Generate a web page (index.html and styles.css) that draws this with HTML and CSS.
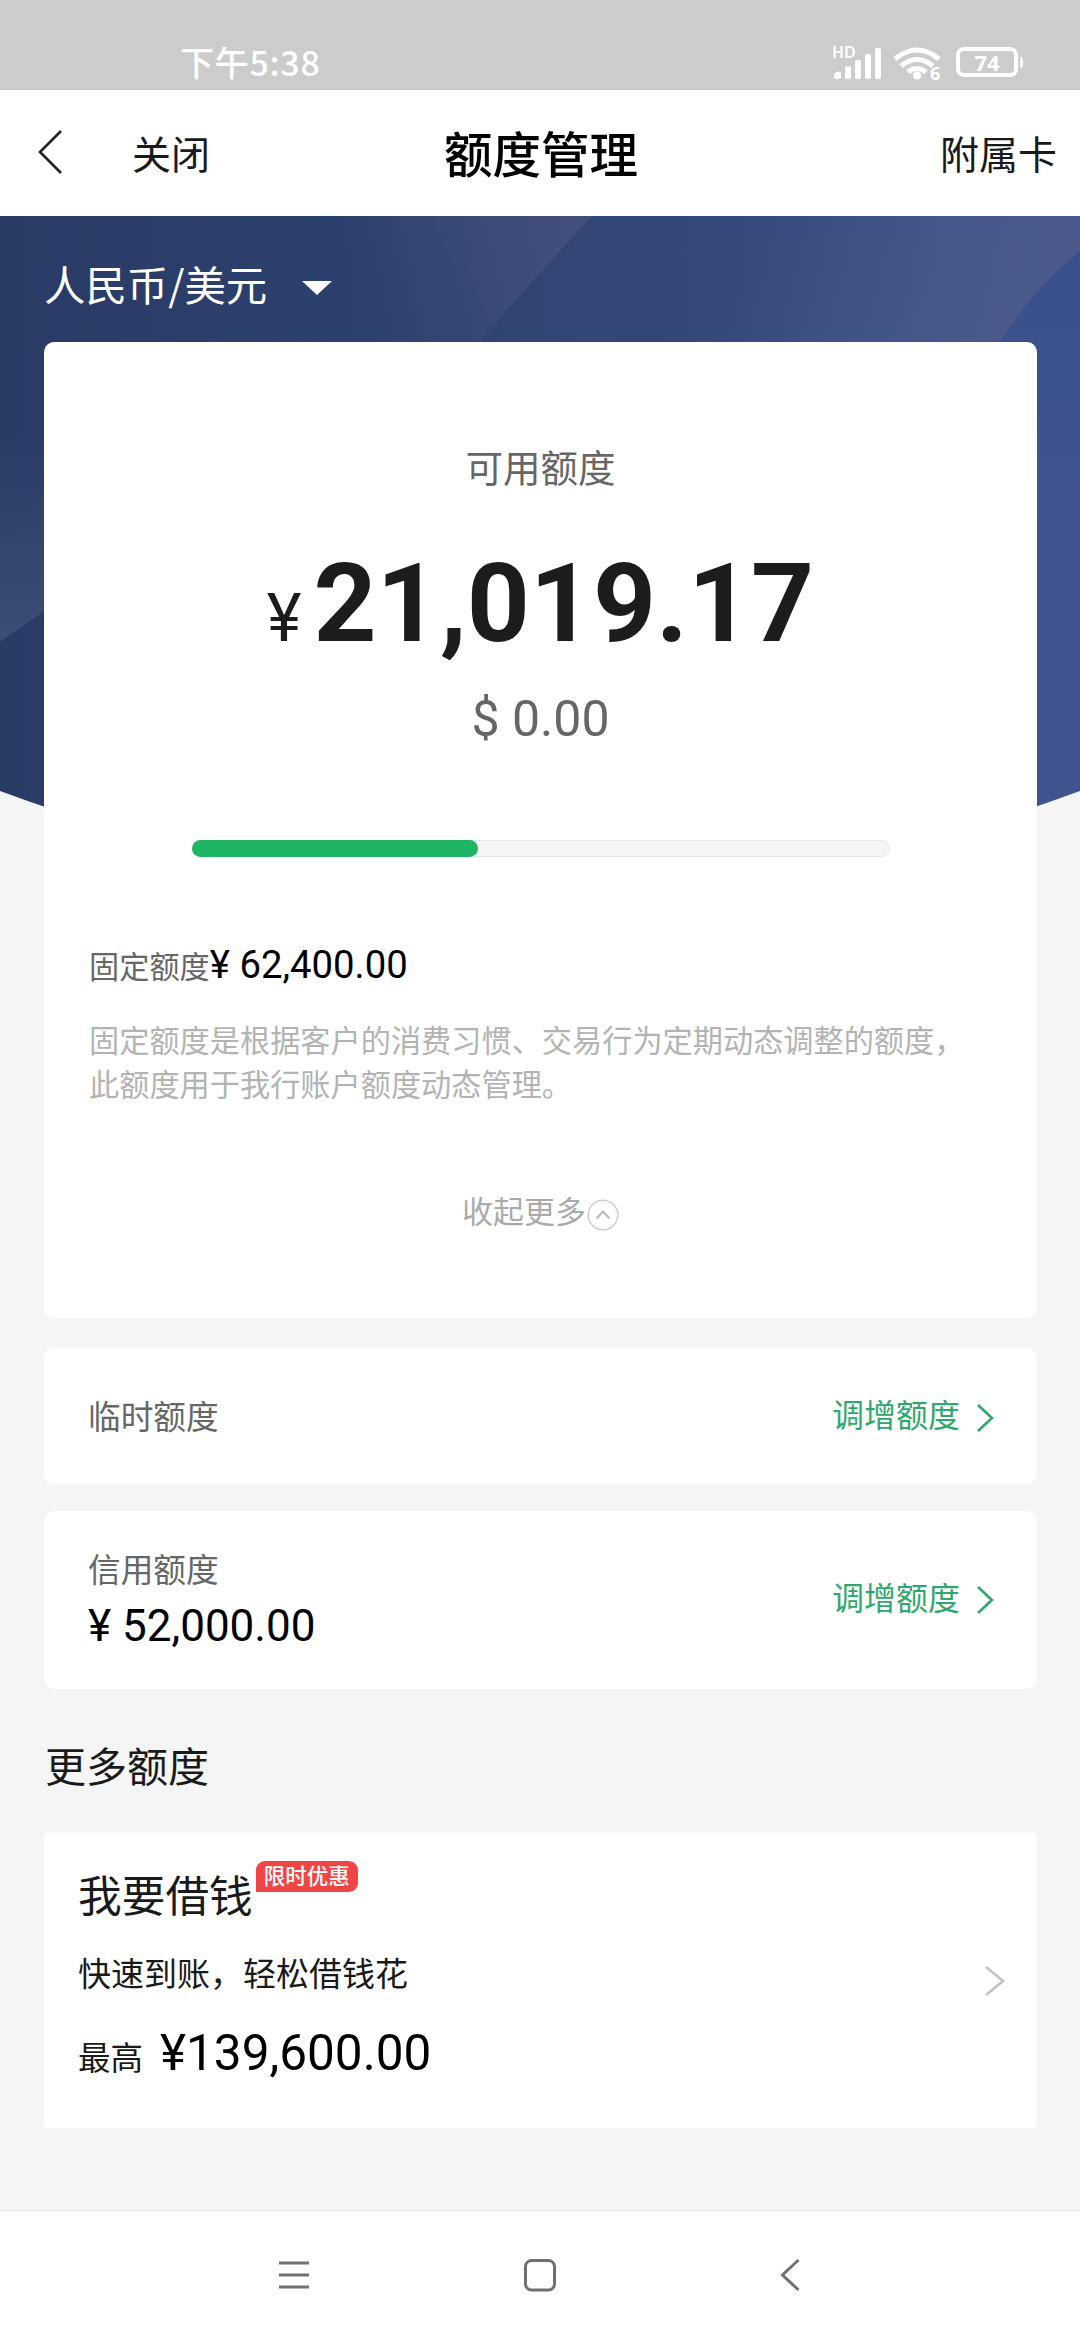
FILE: index.html
```html
<!DOCTYPE html>
<html lang="zh-CN">
<head>
<meta charset="utf-8">
<title>额度管理</title>
<link rel="stylesheet" href="styles.css">
</head>
<body>
<div class="screen">
  <div class="status">
    <span class="time">下午5:38</span>
    <div class="status-icons">
      <span class="hd">HD</span>
      <svg width="196" height="40" viewBox="0 0 196 40">
        <g fill="#fff">
          <path d="M2 34v-3a5 4 0 0 1 7-3v6q-4 2-7 0z"/>
          <rect x="13" y="22" width="6" height="13" rx="2"/>
          <rect x="23" y="16" width="6" height="19" rx="2"/>
          <rect x="33" y="10" width="6" height="25" rx="2"/>
          <rect x="43" y="4" width="6" height="31" rx="2"/>
          <circle cx="85" cy="31.500" r="4"/>
          <text class="six" x="98" y="36">6</text>
          <text class="pct" x="155" y="27" text-anchor="middle">74</text>
          <path d="M189 13q3 5.500 0 11z" stroke="#fff" stroke-width="1.500"/>
        </g>
        <g fill="none" stroke="#fff" stroke-width="5">
          <path d="M63 15q22-18 44 0M69 22q16-13 32 0M76 28q9-7 18 0"/>
          <rect x="126" y="5" width="58" height="26" rx="6" stroke-width="4"/>
        </g>
      </svg>
    </div>
  </div>
  <div class="header">
    <svg class="back" width="26" height="48" viewBox="0 0 26 48"><path d="M24 3L3 24L24 45" fill="none" stroke="#222" stroke-width="2.600"/></svg>
    <span class="close">关闭</span>
    <span class="title">额度管理</span>
    <span class="sub">附属卡</span>
  </div>
  <div class="main">
    <svg class="hero" width="1080" height="640" viewBox="0 0 1080 640">
      <defs>
        <linearGradient id="base" x1="0" y1="0" x2="1" y2="0"><stop offset="0" stop-color="#2a3b66"/><stop offset=".35" stop-color="#2e406d"/><stop offset=".65" stop-color="#364878"/><stop offset="1" stop-color="#41548f"/></linearGradient>
        <linearGradient id="beam" gradientUnits="userSpaceOnUse" x1="360" y1="70" x2="570" y2="0"><stop offset="0" stop-color="#46517b" stop-opacity="0"/><stop offset="1" stop-color="#46527e" stop-opacity=".8"/></linearGradient>
        <linearGradient id="beam2" gradientUnits="userSpaceOnUse" x1="760" y1="20" x2="1010" y2="110"><stop offset="0" stop-color="#4b5a89" stop-opacity="0"/><stop offset="1" stop-color="#4b5a89" stop-opacity=".9"/></linearGradient>
        <linearGradient id="glow" x1="0" y1="0" x2="0" y2="1"><stop offset="0" stop-color="#3c4e73" stop-opacity="0"/><stop offset="1" stop-color="#3c4e73"/></linearGradient>
        <linearGradient id="side" x1="0" y1="0" x2="0" y2="1"><stop offset="0" stop-color="#38508a"/><stop offset="1" stop-color="#41548f"/></linearGradient>
      </defs>
      <path d="M0 0H1080V575Q540 775 0 575Z" fill="url(#base)"/>
      <path d="M300 0H592Q545 50 480 126H240Z" fill="url(#beam)"/>
      <path d="M740 0H1080V36Q1035 70 1000 126H640Z" fill="url(#beam2)"/>
      <path d="M1080 36Q1035 70 1000 126V300H1080Z" fill="url(#side)"/>
      <path d="M0 220H44V395L0 426Z" fill="url(#glow)"/>
    </svg>
    <div class="currency"><span>人民币/美元</span><span class="caret"></span></div>
    <div class="card limit">
      <div class="avail">可用额度</div>
      <div class="amount"><span class="yen">¥</span><b>21,019.17</b></div>
      <div class="usd">$ 0.00</div>
      <div class="track"><div class="fill"></div></div>
      <div class="fixed">固定额度<span>¥ 62,400.00</span></div>
      <div class="desc">固定额度是根据客户的消费习惯、交易行为定期动态调整的额度，<br>此额度用于我行账户额度动态管理。</div>
      <div class="fold"><span>收起更多</span><svg width="32" height="32" viewBox="0 0 32 32"><g fill="none" stroke="#ccc" stroke-width="1.500"><circle cx="16" cy="16" r="14.800"/><path d="M9.500 19.500L16 12.500L22.500 19.500" stroke="#b8b8b8" stroke-width="2"/></g></svg></div>
    </div>
    <div class="card row temp">
      <span class="label">临时额度</span>
      <div class="raise"><span>调增额度</span><svg width="18" height="30" viewBox="0 0 18 30"><path d="M2 2L16 15L2 28" fill="none" stroke="#30a86c" stroke-width="2.600"/></svg></div>
    </div>
    <div class="card row credit">
      <div><div class="label">信用额度</div><div class="money">¥ 52,000.00</div></div>
      <div class="raise"><span>调增额度</span><svg width="18" height="30" viewBox="0 0 18 30"><path d="M2 2L16 15L2 28" fill="none" stroke="#30a86c" stroke-width="2.600"/></svg></div>
    </div>
    <div class="more">更多额度</div>
    <div class="card row loan">
      <div class="loan-info">
        <div class="loan-title">我要借钱<span class="badge">限时优惠</span></div>
        <div class="loan-sub">快速到账，轻松借钱花</div>
        <div class="loan-max">最高<span>¥139,600.00</span></div>
      </div>
      <svg width="22" height="32" viewBox="0 0 22 32"><path d="M2 2L19 16L2 30" fill="none" stroke="#c4c4c4" stroke-width="2.800"/></svg>
    </div>
  </div>
  <div class="nav">
    <svg width="34" height="34" viewBox="0 0 34 34"><path d="M3 5H33M3 17H33M3 29H33" stroke="#707070" stroke-width="3"/></svg>
    <svg width="34" height="34" viewBox="0 0 34 34"><rect x="2.500" y="2.500" width="29" height="29.500" rx="6" fill="none" stroke="#707070" stroke-width="3"/></svg>
    <svg width="34" height="34" viewBox="0 0 34 34"><path d="M28.500 2L12.500 17L28.500 32" fill="none" stroke="#707070" stroke-width="3"/></svg>
  </div>
</div>
</body>
</html>
```
FILE: styles.css
```css
* { box-sizing: border-box; }
body { margin: 0; font-family: Roboto, "Noto Sans CJK SC", sans-serif; color: #1a1a1a; }
svg { display: block; flex: none; }
.screen { width: 1080px; height: 2340px; display: flex; flex-direction: column; background: #f5f5f5; overflow: hidden; }

.status { height: 90px; background: #ccc; display: flex; justify-content: space-between; padding: 43px 52px 0 180px; color: #fff; }
.time { font: 500 34px/38px "Noto Sans CJK SC", sans-serif; letter-spacing: .7px; }
.status-icons { position: relative; padding-top: 1px; }
.hd { position: absolute; left: 0; top: -1px; font: 600 16px/20px "Noto Sans", sans-serif; }
.six { font: 700 18px "Noto Sans", sans-serif; }
.pct { font: 700 22px "Noto Sans", sans-serif; }

.header { height: 126px; background: #fff; display: grid; grid-template-columns: 26px 250px 1fr 288px; align-items: center; padding: 0 23px 3px 37px; font-size: 39px; }
.close { padding-left: 69px; }
.title { font-size: 48.500px; font-weight: 500; color: #000; text-align: center; }
.sub { text-align: right; }

.main { position: relative; height: 1994px; padding: 0 43px 0 44px; }
.hero { position: absolute; left: 0; top: 0; }
.currency { position: relative; height: 126px; padding-top: 7px; display: flex; align-items: center; color: #fff; font: 41.400px/60px "Noto Sans CJK SC", sans-serif; }
.caret { margin: 10px 0 0 35px; border: 15px solid transparent; border-top: 14px solid #fff; border-bottom: 0; }

.card { position: relative; background: #fff; border-radius: 10px; }
.limit { height: 976px; padding: 102px 45px 0 45px; }
.avail { font-size: 37.500px; line-height: 50px; color: #666; text-align: center; }
.amount { display: flex; justify-content: center; align-items: baseline; margin-top: 45px; height: 130px; line-height: 130px; color: #1c1c1c; }
.yen { font-size: 66px; margin-right: 12px; }
.amount b { font-size: 110px; }
.usd { margin-top: 20px; font-size: 50px; line-height: 60px; color: #666; text-align: center; }
.track { margin: 91px 102px 0 103px; height: 17px; border-radius: 9px; background: #f5f5f5; border: 1px solid #e6e6e6; }
.fill { width: 286px; height: 17px; margin: -1px; border-radius: 9px; background: #1fb564; }
.fixed { margin-top: 83px; font-size: 30.200px; line-height: 50px; color: #666; }
.fixed span { font-size: 38.300px; color: #000; }
.desc { margin-top: 27px; font-size: 30.200px; line-height: 44px; color: #b3b3b3; white-space: nowrap; }
.fold { margin-top: 80px; display: flex; justify-content: center; align-items: center; gap: 1px; font-size: 31px; line-height: 50px; color: #aaa; }
.fold span { padding-bottom: 4px; }

.row { display: flex; justify-content: space-between; align-items: center; padding: 0 43px 0 44px; }
.temp { height: 136px; margin-top: 30px; padding-top: 3px; }
.credit { height: 178px; margin-top: 27px; }
.label { font-size: 32.700px; line-height: 44px; color: #666; }
.credit .label { padding-top: 2px; }
.raise { display: flex; align-items: center; gap: 16px; font-size: 32px; line-height: 44px; color: #30a86c; }
.raise span { padding-bottom: 3px; }
.money { font-size: 44px; line-height: 54px; color: #000; margin-top: 6px; }
.more { position: relative; font-size: 41px; line-height: 60px; margin: 49px 0 0 1px; }
.loan { height: 295px; margin-top: 35px; border-radius: 4px; padding: 0 31px 0 34px; }
.loan-info { padding-bottom: 6px; }
.loan-title { display: flex; font-size: 43.700px; line-height: 60px; }
.badge { width: 102px; height: 31px; margin: -6px 0 0 3px; border-radius: 9px 9px 9px 0; background: #f04546; color: #fff; font-size: 21.500px; font-weight: 500; line-height: 31px; text-align: center; }
.loan-sub { font-size: 33px; line-height: 50px; margin-top: 23px; }
.loan-max { font-size: 32.500px; line-height: 60px; margin-top: 23px; }
.loan-max span { font-size: 49.500px; margin-left: 17px; color: #000; }

.nav { height: 130px; background: #fff; border-top: 1px solid #e8e8e8; display: flex; justify-content: center; gap: 213px; padding-top: 47px; }
```
